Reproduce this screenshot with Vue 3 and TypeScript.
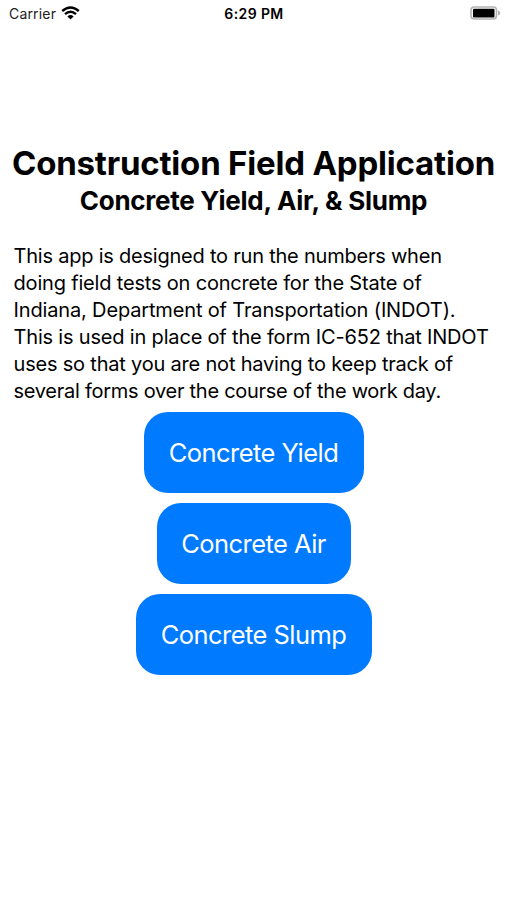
<script setup lang="ts">
const intro: { text: string; tracking: number }[] = [
  { text: 'This app is designed to run the numbers when', tracking: -0.22 },
  { text: 'doing field tests on concrete for the State of', tracking: -0.18 },
  { text: 'Indiana, Department of Transportation (INDOT).', tracking: -0.15 },
  { text: 'This is used in place of the form IC-652 that INDOT', tracking: -0.18 },
  { text: 'uses so that you are not having to keep track of', tracking: -0.2 },
  { text: 'several forms over the course of the work day.', tracking: -0.27 },
]
const tests: { name: string; kind: string }[] = [
  { name: 'Concrete Yield', kind: 'yield' },
  { name: 'Concrete Air', kind: 'air' },
  { name: 'Concrete Slump', kind: 'slump' },
]
</script>

<template>
  <div class="screen">
    <header class="status">
      <div class="carrier">
        <span>Carrier</span>
        <svg class="wifi" viewBox="0 0 19 14" aria-hidden="true">
          <path d="M1.2 5Q9.5 -2.2 17.8 5" />
          <path d="M4 8.1Q9.5 3.2 15 8.1" />
          <path class="dot" d="M6.4 10.4Q9.5 7.8 12.6 10.4L9.5 13.5Z" />
        </svg>
      </div>
      <span class="time">6:29 PM</span>
      <svg class="battery" viewBox="0 0 31 14" aria-hidden="true">
        <rect class="shell" x="1" y="1" width="25.5" height="12" rx="3.2" />
        <rect x="3" y="2.7" width="21.5" height="8.8" rx="1" />
        <path class="cap" d="M28 4.6Q30.3 5.2 30.3 7Q30.3 8.8 28 9.4Z" />
      </svg>
    </header>
    <main>
      <h1>Construction Field Application</h1>
      <h2>Concrete Yield, Air, &amp; Slump</h2>
      <p>
        <span v-for="line in intro" :key="line.text" :style="{ letterSpacing: line.tracking + 'px' }">{{ line.text }}</span>
      </p>
      <nav>
        <button v-for="test in tests" :key="test.kind" :class="test.kind">{{ test.name }}</button>
      </nav>
    </main>
  </div>
</template>

<style>
body { background: #fff; }
</style>
<style scoped>
.screen { height: 900px; overflow: hidden; background: #fff; color: #000; font-family: Inter, sans-serif; }
.status { height: 27px; display: grid; grid-template-columns: 1fr auto 1fr; align-items: center; padding: 0 6px 0 9px; box-sizing: border-box; font-size: 14px; }
.carrier { display: flex; align-items: center; gap: 5px; color: #222; letter-spacing: .18px; }
.wifi { width: 19px; height: 14px; margin-top: -1px; fill: none; stroke: #000; stroke-width: 2.4; }
.wifi .dot { fill: #000; stroke: none; }
.time { font-weight: 600; letter-spacing: .4px; margin-left: -2px; }
.battery { width: 31px; height: 14px; justify-self: end; margin-top: -1px; }
.shell { fill: none; stroke: #b4b4b4; stroke-width: 1.6; }
.cap { fill: #b4b4b4; }
main { padding-top: 116px; }
h1, h2 { margin: 0; text-align: center; white-space: nowrap; }
h1 { font-size: 33px; line-height: 40px; font-weight: 680; letter-spacing: -.2px; }
h2 { font-size: 26px; line-height: 36px; font-weight: 660; letter-spacing: -.27px; }
p { margin: 24px 0 0 13.5px; font-size: 20px; line-height: 26.9px; }
p span { display: block; white-space: nowrap; }
nav { margin-top: 7.4px; display: flex; flex-direction: column; align-items: center; gap: 10px; }
button { height: 80.9px; padding: 0; border: 0; border-radius: 24px; background: #007aff; color: #fff; font: 400 25.5px Inter, sans-serif; letter-spacing: -.55px; }
.yield { width: 220px; }
.air { width: 194px; }
.slump { width: 236px; }
</style>
